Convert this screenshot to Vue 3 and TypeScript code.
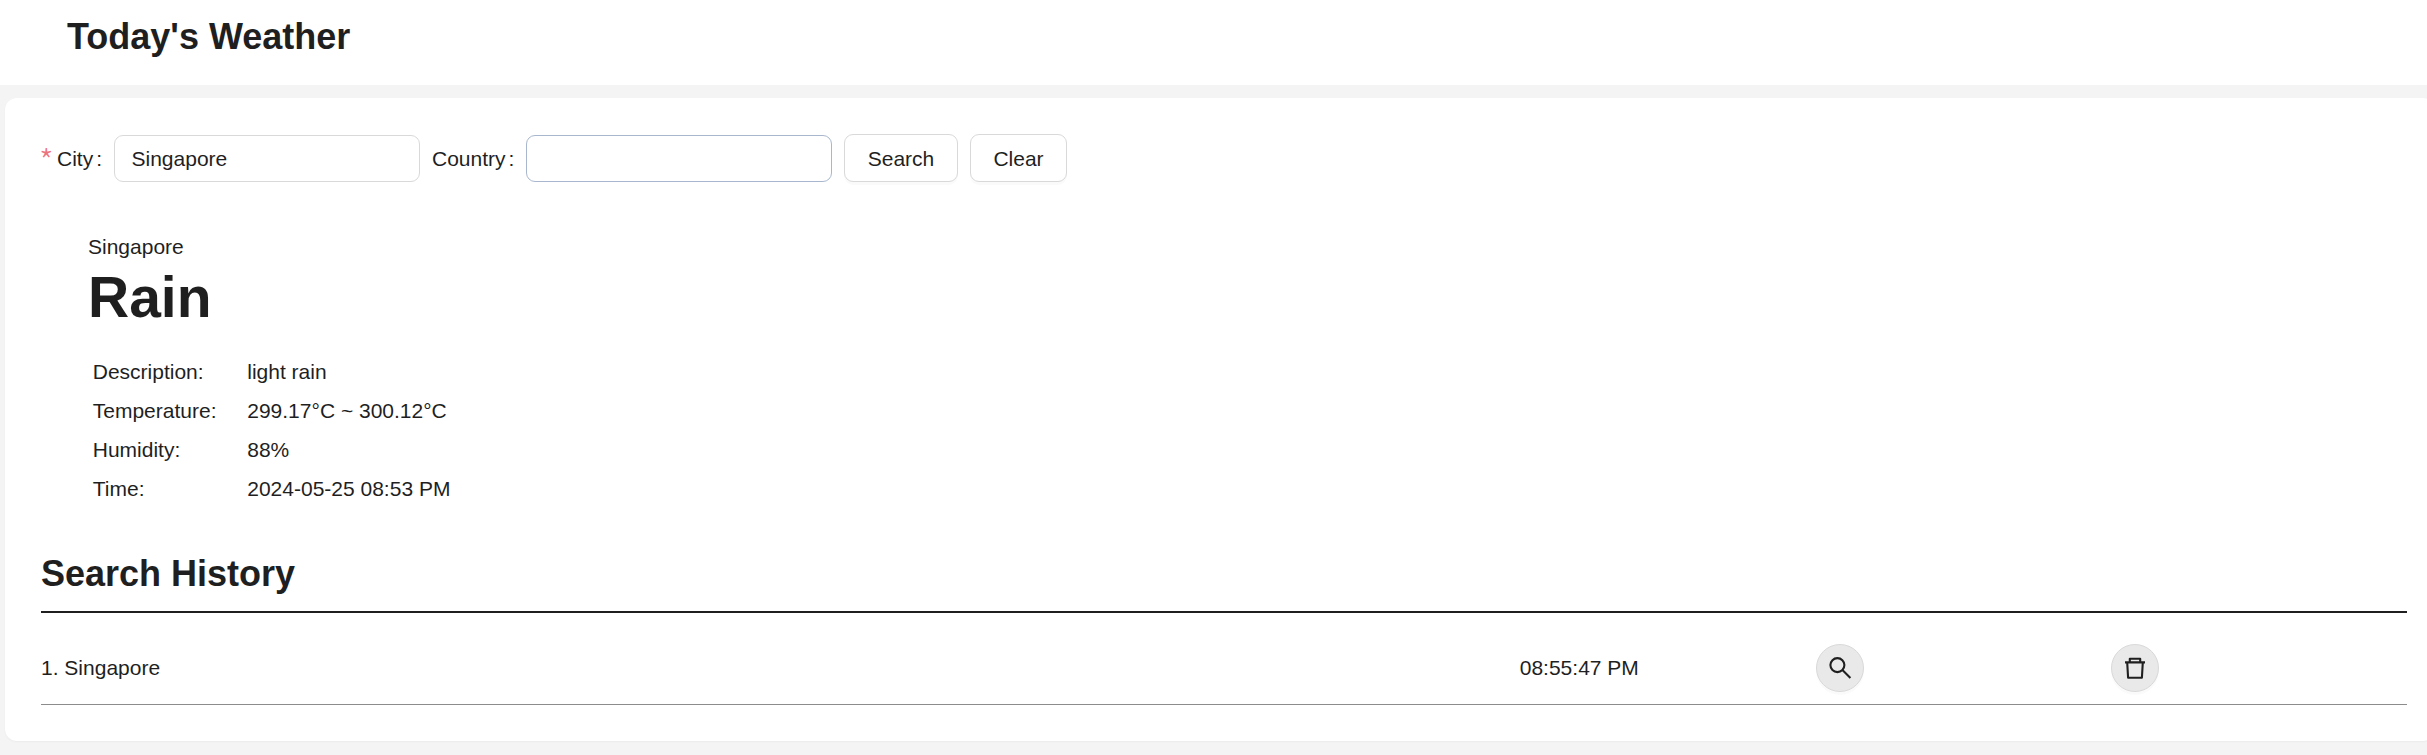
<script setup lang="ts">
import { ref } from 'vue'

interface HistoryEntry {
  id: number
  place: string
  time: string
}

const city = ref('Singapore')
const country = ref('')

const details: { label: string; value: string }[] = [
  { label: 'Description:', value: 'light rain' },
  { label: 'Temperature:', value: '299.17°C ~ 300.12°C' },
  { label: 'Humidity:', value: '88%' },
  { label: 'Time:', value: '2024-05-25 08:53 PM' },
]

const history = ref<HistoryEntry[]>([{ id: 1, place: 'Singapore', time: '08:55:47 PM' }])

function clearForm() {
  city.value = ''
  country.value = ''
}

function searchAgain(entry: HistoryEntry) {
  city.value = entry.place
}

function removeEntry(id: number) {
  history.value = history.value.filter((entry) => entry.id !== id)
}
</script>

<template>
  <div class="page">
    <header class="header">
      <h2 class="title">Today's Weather</h2>
    </header>
    <main class="card">
      <form class="form" @submit.prevent>
        <label class="field city">
          <span class="star">*</span>
          <span class="label">City<span class="colon">:</span></span>
          <input v-model="city" class="input" type="text" />
        </label>
        <label class="field country">
          <span class="label">Country<span class="colon">:</span></span>
          <input v-model="country" class="input hovered" type="text" />
        </label>
        <button class="button search" type="submit">Search</button>
        <button class="button clear" type="button" @click="clearForm">Clear</button>
      </form>

      <section class="weather">
        <div class="place">Singapore</div>
        <h1 class="condition">Rain</h1>
        <dl class="details">
          <template v-for="row in details" :key="row.label">
            <dt>{{ row.label }}</dt>
            <dd>{{ row.value }}</dd>
          </template>
        </dl>
      </section>

      <h2 class="history-title">Search History</h2>
      <div v-for="(entry, index) in history" :key="entry.id" class="history-row">
        <span class="history-text">{{ index + 1 }}. {{ entry.place }}</span>
        <span class="history-text">{{ entry.time }}</span>
        <button class="round" type="button" aria-label="Search again" @click="searchAgain(entry)">
          <svg viewBox="0 0 24 24" width="24" height="24" fill="none" stroke="currentColor" stroke-width="2.1">
            <circle cx="9.4" cy="9.1" r="7" />
            <path d="M14.4 14.1L22.4 22" />
          </svg>
        </button>
        <button class="round" type="button" aria-label="Delete" @click="removeEntry(entry.id)">
          <svg viewBox="0 0 24 24" width="24" height="24" fill="none" stroke="currentColor" stroke-width="2.1" stroke-linejoin="round">
            <path d="M2 6.4H22M6.8 6V2.7H17.2V6M4.2 6.4L5.1 21.7H18.9L19.8 6.4" />
          </svg>
        </button>
      </div>
    </main>
  </div>
</template>

<style>
html,
body {
  margin: 0;
  overflow: hidden;
  background: #f4f4f4;
}
</style>

<style scoped>
.page {
  height: 755px;
  overflow: hidden;
  background: #f4f4f4;
  color: #1f1f1f;
  font-family: "Liberation Sans", Arial, sans-serif;
  font-size: 21px;
  line-height: 33px;
}
.page * {
  box-sizing: border-box;
}
.header {
  height: 85px;
  padding: 13px 67px 0;
  background: #fff;
}
.title,
.history-title {
  margin: 0;
  font-size: 36px;
  font-weight: 700;
  line-height: 47px;
}
.card {
  height: 643px;
  margin: 13px -8px 0 5px;
  padding: 36px 28px 0 36px;
  border-radius: 12px;
  background: #fff;
  box-shadow: 0 1px 2px rgba(0, 0, 0, 0.04);
}
.form {
  display: flex;
  align-items: center;
  height: 49px;
}
.field {
  display: flex;
  align-items: center;
}
.city {
  width: 379px;
  margin-right: 12px;
}
.country {
  width: 400px;
  margin-right: 12px;
}
.star {
  width: 18px;
  margin-left: -2px;
  padding-top: 4px;
  color: #ec7480;
  font-family: "Noto Sans CJK SC", sans-serif;
  font-size: 33px;
  font-weight: 300;
}
.label {
  flex: 1;
  white-space: nowrap;
}
.colon {
  margin-left: 3px;
}
.input {
  width: 306px;
  height: 47px;
  padding: 0 16.5px;
  border: 1px solid #d9d9d9;
  border-radius: 9px;
  outline: none;
  background: #fff;
  color: inherit;
  font: inherit;
}
.hovered {
  border-color: #a9b7ce;
}
.button {
  align-self: flex-start;
  height: 48px;
  padding: 0;
  border: 1px solid #d9d9d9;
  border-radius: 9px;
  background: #fff;
  box-shadow: 0 3px 0 rgba(0, 0, 0, 0.02);
  color: inherit;
  font: inherit;
}
.search {
  width: 114px;
  margin-right: 12px;
}
.clear {
  width: 97px;
}
.weather {
  padding: 47px 0 0 47px;
}
.condition {
  margin: 0;
  font-size: 57px;
  font-weight: 700;
  line-height: 69px;
}
.details {
  display: grid;
  grid-template-columns: 154.5px auto;
  row-gap: 6px;
  margin: 23px 0 0;
  padding-left: 4.75px;
}
.details dt,
.details dd {
  margin: 0;
}
.history-title {
  height: 64px;
  margin-top: 44px;
  border-bottom: 2px solid #1f1f1f;
  line-height: 49px;
}
.history-row {
  display: grid;
  grid-template-columns: 15fr 3fr 3fr 3fr;
  align-items: center;
  height: 92px;
  padding-top: 19px;
  border-bottom: 1px solid #8c8c8c;
}
.history-text {
  padding-bottom: 2px;
}
.round {
  display: flex;
  align-items: center;
  justify-content: center;
  width: 48px;
  height: 48px;
  padding: 0;
  border: 1px solid #d9d9d9;
  border-radius: 50%;
  background: #e9e9e9;
  box-shadow: 0 3px 0 rgba(0, 0, 0, 0.02);
  color: inherit;
}
</style>
